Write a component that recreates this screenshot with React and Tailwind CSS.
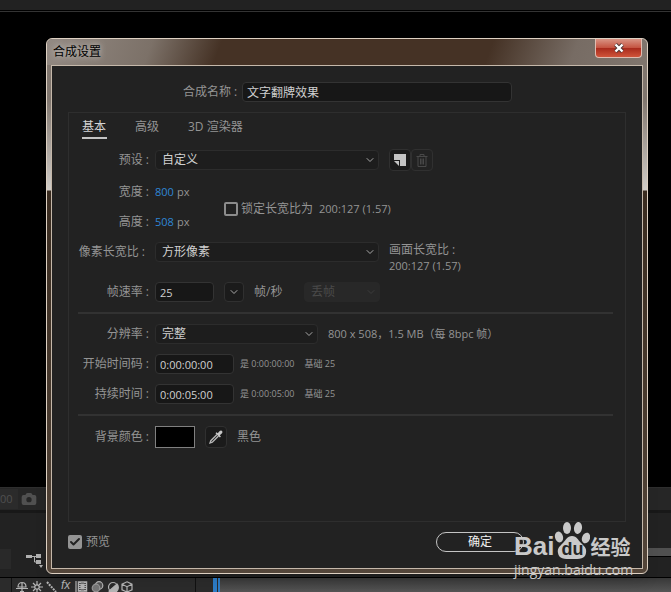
import React, { useState } from "react";
import { Camera, Check, ChevronDown } from "lucide-react";

const Label = ({ htmlFor, children }) => (
  <label
    htmlFor={htmlFor}
    className="w-20 shrink-0 text-right whitespace-nowrap text-[#949494]"
  >
    {children}
  </label>
);

const Select = ({ id, value, className, disabled }) => (
  <div className={`relative h-5 ${className}`}>
    <select
      id={id}
      disabled={disabled}
      defaultValue={value}
      className={`h-5 w-full appearance-none rounded-sm border px-[6px] leading-4 ${
        disabled
          ? "border-[#282828] bg-[#282828] text-[#4a4a4a] opacity-100"
          : "border-[#2c2c2c] bg-[#1d1d1d] text-[#d0d0d0]"
      }`}
    >
      <option>{value}</option>
    </select>
    <ChevronDown
      size={12}
      className={`pointer-events-none absolute right-[3px] top-1 ${
        disabled ? "text-[#3c3c3c]" : "text-[#a8a8a8]"
      }`}
    />
  </div>
);

const TextBox = ({ id, value, className }) => (
  <input
    id={id}
    type="text"
    defaultValue={value}
    className={`h-5 rounded-sm border border-[#333] bg-[#171717] px-1 text-[#d0d0d0] ${className}`}
  />
);

const SizeRow = ({ id, label, value }) => (
  <div className="flex h-5 items-center gap-[6px]">
    <Label htmlFor={id}>{label}</Label>
    <input
      id={id}
      type="text"
      defaultValue={value}
      className="w-5 text-[11px] text-[#2f86d6]"
    />
    <span className="-ml-1 text-[11px]">px</span>
  </div>
);

const TimeRow = ({ id, label, value }) => (
  <div className="flex h-5 items-center gap-[6px]">
    <Label htmlFor={id}>{label}</Label>
    <TextBox id={id} value={value} className="w-[79px] text-[11px]" />
    <p className="flex gap-[10px] text-[9px] whitespace-nowrap">
      <span>是 {value}</span>
      <span>基础 25</span>
    </p>
  </div>
);

const tabs = ["基本", "高级", "3D 渲染器"];

const BasicTab = () => {
  const [locked, setLocked] = useState(false);

  return (
    <div className="flex flex-col">
      {/* Preset */}
      <div className="flex h-5 items-center gap-[6px]">
        <Label htmlFor="preset">预设 :</Label>
        <Select id="preset" value="自定义" className="w-[224px]" />
        <div className="ml-1 flex">
          <button
            type="button"
            aria-label="保存预设"
            className="flex h-[22px] w-[22px] items-center justify-center rounded-sm border border-[#303030] bg-[#1b1b1b]"
          >
            <svg width="12" height="12" viewBox="0 0 12 12">
              <path d="M0 0h12v12H6V6H0z" fill="#c4c4c4" />
              <path d="M0 7h5v5z" fill="#c4c4c4" />
            </svg>
          </button>
          <button
            type="button"
            aria-label="删除预设"
            disabled
            className="flex h-[22px] w-[22px] items-center justify-center rounded-sm border border-[#303030]"
          >
            <svg width="12" height="13" viewBox="0 0 12 13" fill="none" stroke="#484848">
              <path d="M.5 2.500h11M4 2V.5h4V2M2 3v9.500h8V3M4.500 4.500v6M6 4.500v6M7.500 4.500v6" />
            </svg>
          </button>
        </div>
      </div>

      {/* Size */}
      <div className="mt-3 flex items-center">
        <div className="flex w-[155px] flex-col gap-[10px]">
          <SizeRow id="width" label="宽度 :" value="800" />
          <SizeRow id="height" label="高度 :" value="508" />
        </div>
        <label className="flex items-center gap-[3px] pt-1 whitespace-nowrap">
          <input
            type="checkbox"
            checked={locked}
            onChange={(e) => setLocked(e.target.checked)}
            className="h-[14px] w-[14px] appearance-none rounded-xs border-2 border-[#8c8c8c] checked:bg-[#8c8c8c]"
          />
          锁定长宽比为
          <span className="ml-[3px] text-[11px]">200:127 (1.57)</span>
        </label>
      </div>

      {/* Pixel aspect ratio */}
      <div className="mt-[10px] flex h-5 items-center gap-[6px]">
        <Label htmlFor="aspect">
          <span className="mr-1">像素长宽比 :</span>
        </Label>
        <Select id="aspect" value="方形像素" className="w-[224px]" />
        <div className="mt-3 ml-1 leading-4 whitespace-nowrap">
          <p>画面长宽比 :</p>
          <p className="text-[11px] leading-4">200:127 (1.57)</p>
        </div>
      </div>

      {/* Frame rate */}
      <div className="mt-5 flex h-5 items-center gap-[6px]">
        <Label htmlFor="rate">帧速率 :</Label>
        <TextBox id="rate" value="25" className="w-[59px] text-[11px]" />
        <button
          type="button"
          aria-label="选择帧速率"
          className="ml-1 flex h-5 w-5 items-center justify-center rounded-sm border border-[#303030] bg-[#1b1b1b] text-[#a8a8a8]"
        >
          <ChevronDown size={12} />
        </button>
        <span className="ml-1 w-11">帧/秒</span>
        <Select id="drop" value="丢帧" className="w-[76px]" disabled />
      </div>

      <hr className="mt-[10px] mr-3 ml-[9px] border-t-2 border-[#323232]" />

      {/* Resolution */}
      <div className="mt-[10px] flex h-5 items-center gap-[6px]">
        <Label htmlFor="resolution">分辨率 :</Label>
        <Select id="resolution" value="完整" className="w-[163px]" />
        <span className="ml-1 text-[11px] whitespace-nowrap">
          800 x 508，1.5 MB（每 8bpc 帧）
        </span>
      </div>
      <div className="mt-[10px] flex flex-col gap-[10px]">
        <TimeRow id="start" label="开始时间码 :" value="0:00:00:00" />
        <TimeRow id="duration" label="持续时间 :" value="0:00:05:00" />
      </div>

      <hr className="mt-[10px] mr-3 ml-[9px] border-t-2 border-[#323232]" />

      {/* Background colour */}
      <div className="mt-[10px] flex h-[22px] items-center gap-[6px]">
        <Label htmlFor="swatch">背景颜色 :</Label>
        <button
          id="swatch"
          type="button"
          aria-label="背景颜色"
          className="h-[22px] w-10 border border-[#808080] bg-black"
        />
        <button
          type="button"
          aria-label="吸管"
          className="ml-1 flex h-[22px] w-[22px] items-center justify-center rounded-sm border border-[#303030] bg-[#1b1b1b]"
        >
          <svg width="16" height="16" viewBox="0 0 16 16">
            <path
              d="M9 5.500 2.800 11.700 2 14l2.300-.8L10.500 7"
              fill="none"
              stroke="#b8b8b8"
              strokeWidth="1.300"
            />
            <path
              d="m7.500 4.200 1-1 1.200 1.100 2-2.200c1.600-1.600 3.800.6 2.300 2.200l-2.200 2 1.100 1.200-1 1z"
              fill="#c8c8c8"
            />
          </svg>
        </button>
        <span className="ml-1">黑色</span>
      </div>
    </div>
  );
};

const Backdrop = () => (
  <div className="flex h-full flex-col">
    <div className="h-[10px] bg-[#222]" />
    <div className="mt-px h-px bg-[#333]" />
    <div className="flex-1" />
    <div className="flex h-[23px] items-center border-t border-[#2e2e2e] bg-[#262626]">
      <span className="w-[18px] bg-[#2b2b2b] leading-5 text-[11px] text-[#505050]">
        00
      </span>
      <Camera
        size={16}
        className="ml-[3px] fill-[#505050] text-[#505050] [&_circle]:fill-[#262626] [&_circle]:stroke-[#262626]"
      />
    </div>
    <div className="h-[3px] bg-[#181818]" />
    <div className="flex h-16 bg-[#222]">
      <div className="mt-9 h-5 w-[11px] bg-[#292929]" />
      <svg className="mt-[39px] ml-[15px]" width="18" height="16" viewBox="0 0 18 16">
        <path d="M0 3h6v3H0zM10 2h5v4h-5zM10 8h5v4h-5zM13 13h4l-2 3z" fill="#b0b0b0" />
        <path d="M5 4.500h6M8.500 4v6H11" fill="none" stroke="#b0b0b0" />
      </svg>
      <div className="mt-[35px] ml-auto h-[9px] w-[30px] border-b border-black bg-[#505050]" />
    </div>
    <div className="flex h-[15px] border-t border-black bg-[#2b2b2b]">
      <div className="w-3 border-r border-[#111]" />
      <div className="w-[184px] border-r border-[#111] pt-[3px] pl-1">
        <svg
          width="118"
          height="11"
          viewBox="0 0 118 11"
          fill="none"
          stroke="#b5b5b5"
          strokeWidth="1.200"
          className="overflow-visible"
        >
          <path d="M2 6C2 0 10 0 10 6zM0 7.500h12M6 1v10M4 10.500h4" />
          <circle cx="21" cy="6" r="2.200" />
          <path d="M21 0v4M21 8v3M15 6h4M23 6h4M17 2l2 2M23 8l2 2M25 2l-2 2M19 8l-2 2" />
          <path d="m31 1 9 10" strokeWidth="2" strokeDasharray="2 1" />
          <path d="M60 0v11" />
          <path d="M62.500 1h8v9h-8z" strokeWidth="1.500" />
          <path d="M64 1v9M69 1v9" strokeWidth="2" strokeDasharray="1 1" />
          <path d="M65 3h3v5h-3z" fill="#b5b5b5" />
          <circle cx="83" cy="4.500" r="3.800" fill="#555" />
          <circle cx="80" cy="7" r="3.800" fill="#777" stroke="#999" />
          <circle cx="97" cy="6" r="4.500" />
          <path d="M101 3a5 5 0 0 1-8 7z" fill="#b5b5b5" />
          <path d="m111 .8 5 2.400v5.600l-5 2.200-5-2.200V3.200zM106 3.200l5 2.500 5-2.500M111 6v5" />
          <text
            x="45"
            y="8"
            fill="#b5b5b5"
            stroke="none"
            className="font-['Liberation_Sans'] text-[12px] italic"
          >
            fx
          </text>
        </svg>
      </div>
      <div className="ml-[17px] w-1 bg-[#2d7dc8]" />
      <div className="ml-px w-[2px] bg-[#2d7dc8]" />
      <div className="flex-1 bg-linear-to-b from-[#383838] to-[#555]" />
    </div>
  </div>
);

const Watermark = () => (
  <div className="pointer-events-none absolute right-[36px] bottom-[14px] w-[121px] text-[#c9c9c9]">
    <div className="flex h-10 items-end">
      <span className="font-['Liberation_Sans'] text-[26px] leading-8 font-bold">
        Bai
      </span>
      <div className="relative">
        <svg width="36" height="40" viewBox="0 0 36 40" fill="currentColor">
          <ellipse cx="13" cy="6" rx="4" ry="6" />
          <ellipse cx="24" cy="6" rx="4" ry="6" transform="rotate(8 24 6)" />
          <ellipse cx="5" cy="15" rx="4" ry="5.500" transform="rotate(-15 5 15)" />
          <ellipse cx="32" cy="16" rx="4" ry="5.500" transform="rotate(20 32 16)" />
          <path d="M18 14c-5 0-6 4-9 7-3 3-6 5-5 10 1 6 6 6 14 6s13 0 14-6c1-5-2-7-5-10-3-3-4-7-9-7z" />
        </svg>
        <span className="absolute inset-x-0 bottom-px text-center font-['Liberation_Sans'] text-[18px] leading-6 font-bold text-[#262626]">
          du
        </span>
      </div>
      <span className="text-[20px] leading-7 font-bold whitespace-nowrap">
        经验
      </span>
    </div>
    <p className="text-[14px] leading-4 font-medium whitespace-nowrap">
      jingyan.baidu.com
    </p>
  </div>
);

export default function App() {
  const [activeTab, setActiveTab] = useState(tabs[0]);
  const [preview, setPreview] = useState(true);

  return (
    <div className="relative h-screen min-h-[592px] overflow-hidden bg-black font-['Open_Sans','Noto_Sans_CJK_SC',sans-serif] text-[12px] leading-4 text-[#949494]">
      <Backdrop />

      {/* Dialog window */}
      <div className="absolute inset-0 flex pt-[38px] pr-[23px] pb-[18px] pl-[46px]">
        <div
          role="dialog"
          aria-labelledby="title"
          className="flex flex-1 flex-col rounded-md border border-[#ddd0c2] bg-linear-[180deg,#80766e_0,#80766e_60px,#d0ccc7_151px,#3a2c20_152px,#54463a_100%] shadow-lg"
        >
          <header className="flex h-[26px] items-start rounded-t-md bg-linear-[110deg,#938a83_0,#7c7168_100px,#453225_165px,#453225_420px,#776c64_500px,#80766e_100%] pr-[5px]">
            <h1
              id="title"
              className="mt-[5px] ml-[6px] text-black [text-shadow:0_0_6px_#ddd]"
            >
              合成设置
            </h1>
            <button
              type="button"
              aria-label="关闭"
              className="ml-auto flex h-[19px] w-[47px] items-center justify-center rounded-b border border-t-0 border-[#e0bcb0] bg-linear-[180deg,#d99484_0,#c4513f_50%,#a82a1c_51%,#d0543a_100%]"
            >
              <svg width="12" height="10" viewBox="0 0 12 10">
                <path d="m2.500 1.500 7 7M9.500 1.500l-7 7" stroke="#4a3434" strokeWidth="4" />
                <path d="m2.500 1.500 7 7M9.500 1.500l-7 7" stroke="#fff" strokeWidth="2.400" />
              </svg>
            </button>
          </header>

          <form
            onSubmit={(e) => e.preventDefault()}
            className="mx-1 mb-1 flex flex-1 flex-col border border-[#c5b8aa] bg-[#222]"
          >
            {/* Composition name */}
            <div className="flex items-center gap-1 pt-4 pl-[131px]">
              <label htmlFor="name" className="w-[55px] whitespace-nowrap">
                合成名称 :
              </label>
              <TextBox id="name" value="文字翻牌效果" className="w-[270px]" />
            </div>

            <section className="mx-4 mt-[10px] flex flex-1 flex-col border border-[#2e2e2e]">
              <nav className="flex h-[25px] gap-7 pt-[6px] pl-[13px]">
                {tabs.map((tab) => (
                  <button
                    key={tab}
                    type="button"
                    onClick={() => setActiveTab(tab)}
                    className={`h-5 min-w-[25px] border-b-2 pb-1 text-left whitespace-nowrap ${
                      activeTab === tab
                        ? "border-[#c4c4c4] text-[#d4d4d4]"
                        : "border-transparent"
                    }`}
                  >
                    {tab}
                  </button>
                ))}
              </nav>
              <div className="mt-3">
                <BasicTab />
              </div>
            </section>

            {/* Footer */}
            <footer className="flex h-[46px] items-center pr-[118px] pb-[6px] pl-4">
              <label className="flex items-center gap-1">
                <span className="relative flex">
                  <input
                    type="checkbox"
                    checked={preview}
                    onChange={(e) => setPreview(e.target.checked)}
                    className="h-[14px] w-[14px] appearance-none rounded-xs border-2 border-[#949494] checked:bg-[#949494]"
                  />
                  {preview && (
                    <Check
                      size={12}
                      strokeWidth={4}
                      className="pointer-events-none absolute top-px left-px text-[#222]"
                    />
                  )}
                </span>
                预览
              </label>
              <button
                type="submit"
                className="ml-auto h-5 w-[88px] rounded-full border border-[#c4c4c4] leading-4 text-[#f0f0f0]"
              >
                确定
              </button>
            </footer>
          </form>
        </div>
      </div>

      <Watermark />
    </div>
  );
}
